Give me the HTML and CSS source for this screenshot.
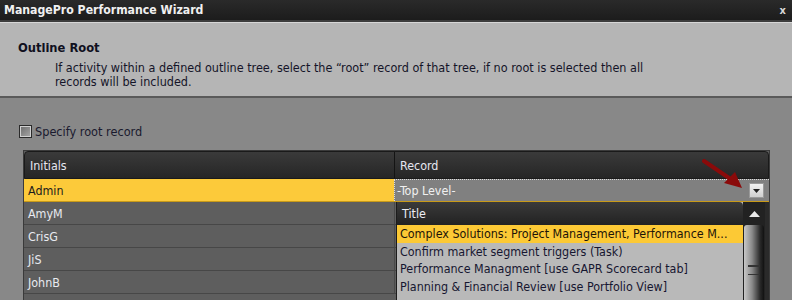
FILE: index.html
```html
<!DOCTYPE html>
<html>
<head>
<meta charset="utf-8">
<link rel="stylesheet" href="styles.css">
</head>
<body>
<div class="window">
  <div class="titlebar">
    <span class="title">ManagePro Performance Wizard</span>
    <span class="close">x</span>
  </div>
  <div class="header">
    <div class="h-title">Outline Root</div>
    <div class="h-desc">If activity within a defined outline tree, select the “root” record of that tree, if no root is selected then all<br>records will be included.</div>
  </div>
  <div class="content">
    <label class="check"><span class="box"></span><span>Specify root record</span></label>
    <div class="grid">
      <div class="ghead">
        <div class="c1">Initials</div>
        <div class="c2">Record</div>
      </div>
      <div class="row sel">
        <div class="c1">Admin</div>
        <div class="c2 edit"><span>-Top Level-</span><span class="ddbtn"><svg width="7" height="4" viewBox="0 0 7 4"><path d="M0 0h7L3.5 4z" fill="#222"/></svg></span></div>
      </div>
      <div class="row"><div class="c1">AmyM</div><div class="c2"></div></div>
      <div class="row"><div class="c1">CrisG</div><div class="c2"></div></div>
      <div class="row"><div class="c1">JiS</div><div class="c2"></div></div>
      <div class="row"><div class="c1">JohnB</div><div class="c2"></div></div>

      <div class="dropdown">
        <div class="dd-main">
          <div class="dd-head">Title</div>
          <div class="dd-item hl">Complex Solutions: Project Management, Performance M...</div>
          <div class="dd-item">Confirm market segment triggers (Task)</div>
          <div class="dd-item">Performance Managment [use GAPR Scorecard tab]</div>
          <div class="dd-item">Planning &amp; Financial Review [use Portfolio View]</div>
        </div>
        <div class="scroll">
          <div class="sc-up"><svg width="11" height="6" viewBox="0 0 11 6"><path d="M5.5 0L11 6H0z" fill="#e8e8e8"/></svg></div>
          <div class="sc-track"><div class="thumb"><span class="grip"></span></div></div>
        </div>
      </div>
      <svg class="arrow" width="44" height="34" viewBox="0 0 44 34"><path d="M2 3L30 22" stroke="#8a0a0a" stroke-width="4" stroke-linecap="round"/><path d="M40 30L22 25L33 14z" fill="#8a0a0a"/></svg>
    </div>
  </div>
</div>
</body>
</html>
```
FILE: styles.css
```css
html, body {
  margin: 0;
  padding: 0;
}
body {
  width: 792px;
  height: 300px;
  overflow: hidden;
  background: #888888;
  font-family: "DejaVu Sans Condensed", "DejaVu Sans", sans-serif;
  font-size: 12.5px;
}
.window {
  display: flex;
  flex-direction: column;
  height: 300px;
}
.titlebar {
  flex-shrink: 0;
  height: 20px;
  background: linear-gradient(#2a2a2a, #1c1c1c);
  display: flex;
  align-items: center;
  justify-content: space-between;
  padding: 0 4px 0 4px;
  border-bottom: 2px solid #3c3c3c;
}
.title {
  color: #f0f0f0;
  font-size: 12.2px;
  font-weight: bold;
}
.close {
  color: #d8d8d8;
  font-weight: bold;
  font-size: 11px;
  margin-right: 2px;
}
.header {
  flex-shrink: 0;
  height: 76px;
  background: #b5b5b5;
  border-top: 1px solid #d6d6d6;
  border-bottom: 2px solid #5a5a5a;
  padding: 0 0 0 18px;
  box-sizing: border-box;
  color: #141428;
}
.h-title {
  font-weight: bold;
  font-size: 12.8px;
  line-height: 15px;
  margin-top: 17px;
  color: #10101e;
}
.h-desc {
  margin-left: 37px;
  margin-top: 6px;
  line-height: 14px;
  font-size: 12.5px;
}
.content {
  flex: 1;
  min-height: 0;
  padding: 26px 0 0 19px;
  position: relative;
}
.check {
  display: flex;
  align-items: center;
  gap: 3px;
  color: #1a1a2e;
  font-size: 12.6px;
  height: 14px;
}
.box {
  width: 11px;
  height: 11px;
  border: 1px solid #2a2a2a;
  background: linear-gradient(135deg, #6a6a6a, #a8a8a8);
  box-shadow: inset 0 0 0 1px #d0d0d0;
}
.grid {
  margin: 12px 0 0 4px;
  width: 745px;
  border: 1px solid #3a3a3a;
  border-bottom: none;
  background: #5e5e5e;
  position: relative;
  height: 160px;
  font-size: 12.4px;
}
.ghead {
  display: flex;
  height: 28px;
  box-sizing: border-box;
  background: linear-gradient(#3a3a3a, #262626);
  border: 1px solid #1a1a1a;
  border-radius: 4px 4px 0 0;
  color: #e6e6f0;
}
.ghead .c1, .ghead .c2 {
  display: flex;
  align-items: center;
  padding-left: 5px;
}
.ghead .c2 {
  border-left: 1px solid #141414;
}
.c1 {
  width: 364px;
  padding-left: 4px;
}
.c2 {
  flex: 1;
}
.row {
  display: flex;
  height: 22px;
  border-bottom: 1px solid #474747;
  color: #e8eaf0;
}
.row .c1 {
  display: flex;
  align-items: center;
  padding-left: 4px;
  width: 366px;
  border-right: 1px solid #4a4a4a;
}
.row.sel {
  border-bottom: 1px solid #c89a18;
}
.row.sel .c1 {
  background: #fcca3a;
  color: #1c1c1c;
  border-right: none;
}
.edit {
  background: #808080;
  border-top: 1px dotted #dcdcdc;
  border-left: 1px dotted #dcdcdc;
  display: flex;
  align-items: center;
  justify-content: space-between;
  padding: 0 5px 0 2px;
  color: #f0f0f0;
}
.ddbtn {
  width: 13px;
  height: 13px;
  background: linear-gradient(#f2f2f2, #cfcfcf);
  border: 1px solid #9a9a9a;
  display: flex;
  align-items: center;
  justify-content: center;
}
.dropdown {
  position: absolute;
  left: 372px;
  top: 51px;
  right: 0;
  bottom: 0;
  display: flex;
  background: #2a2a2a;
  border-left: 1px solid #1c1c1c;
}
.dd-main {
  flex: 1;
  display: flex;
  flex-direction: column;
  background: #b9b9b9;
}
.dd-head {
  height: 23px;
  flex-shrink: 0;
  background: linear-gradient(#3a3a3a, #222);
  color: #ececf4;
  display: flex;
  align-items: center;
  padding-left: 5px;
  border-radius: 0 4px 0 0;
}
.dd-item {
  height: 17.5px;
  flex-shrink: 0;
  display: flex;
  align-items: center;
  padding-left: 3px;
  color: #161630;
  white-space: nowrap;
}
.dd-item.hl {
  background: #fcc935;
  color: #1c1408;
}
.scroll {
  width: 22px;
  display: flex;
  flex-direction: column;
  margin-right: 4px;
  background: #222;
}
.sc-up {
  height: 23px;
  flex-shrink: 0;
  display: flex;
  align-items: center;
  justify-content: center;
}
.sc-track {
  flex: 1;
  padding: 0 1px;
}
.thumb {
  height: 100%;
  background: linear-gradient(90deg, #c8c8c8 0%, #8a8a8a 40%, #2a2a2a 80%, #111 100%);
  border-radius: 3px 3px 0 0;
  position: relative;
}
.grip {
  position: absolute;
  left: 4px;
  top: 40px;
  width: 12px;
  height: 8px;
  border-top: 1px solid #333;
  border-bottom: 1px solid #333;
  box-shadow: 0 3px 0 -2px #333 inset;
}
.arrow {
  position: absolute;
  left: 678px;
  top: 7px;
}
```
